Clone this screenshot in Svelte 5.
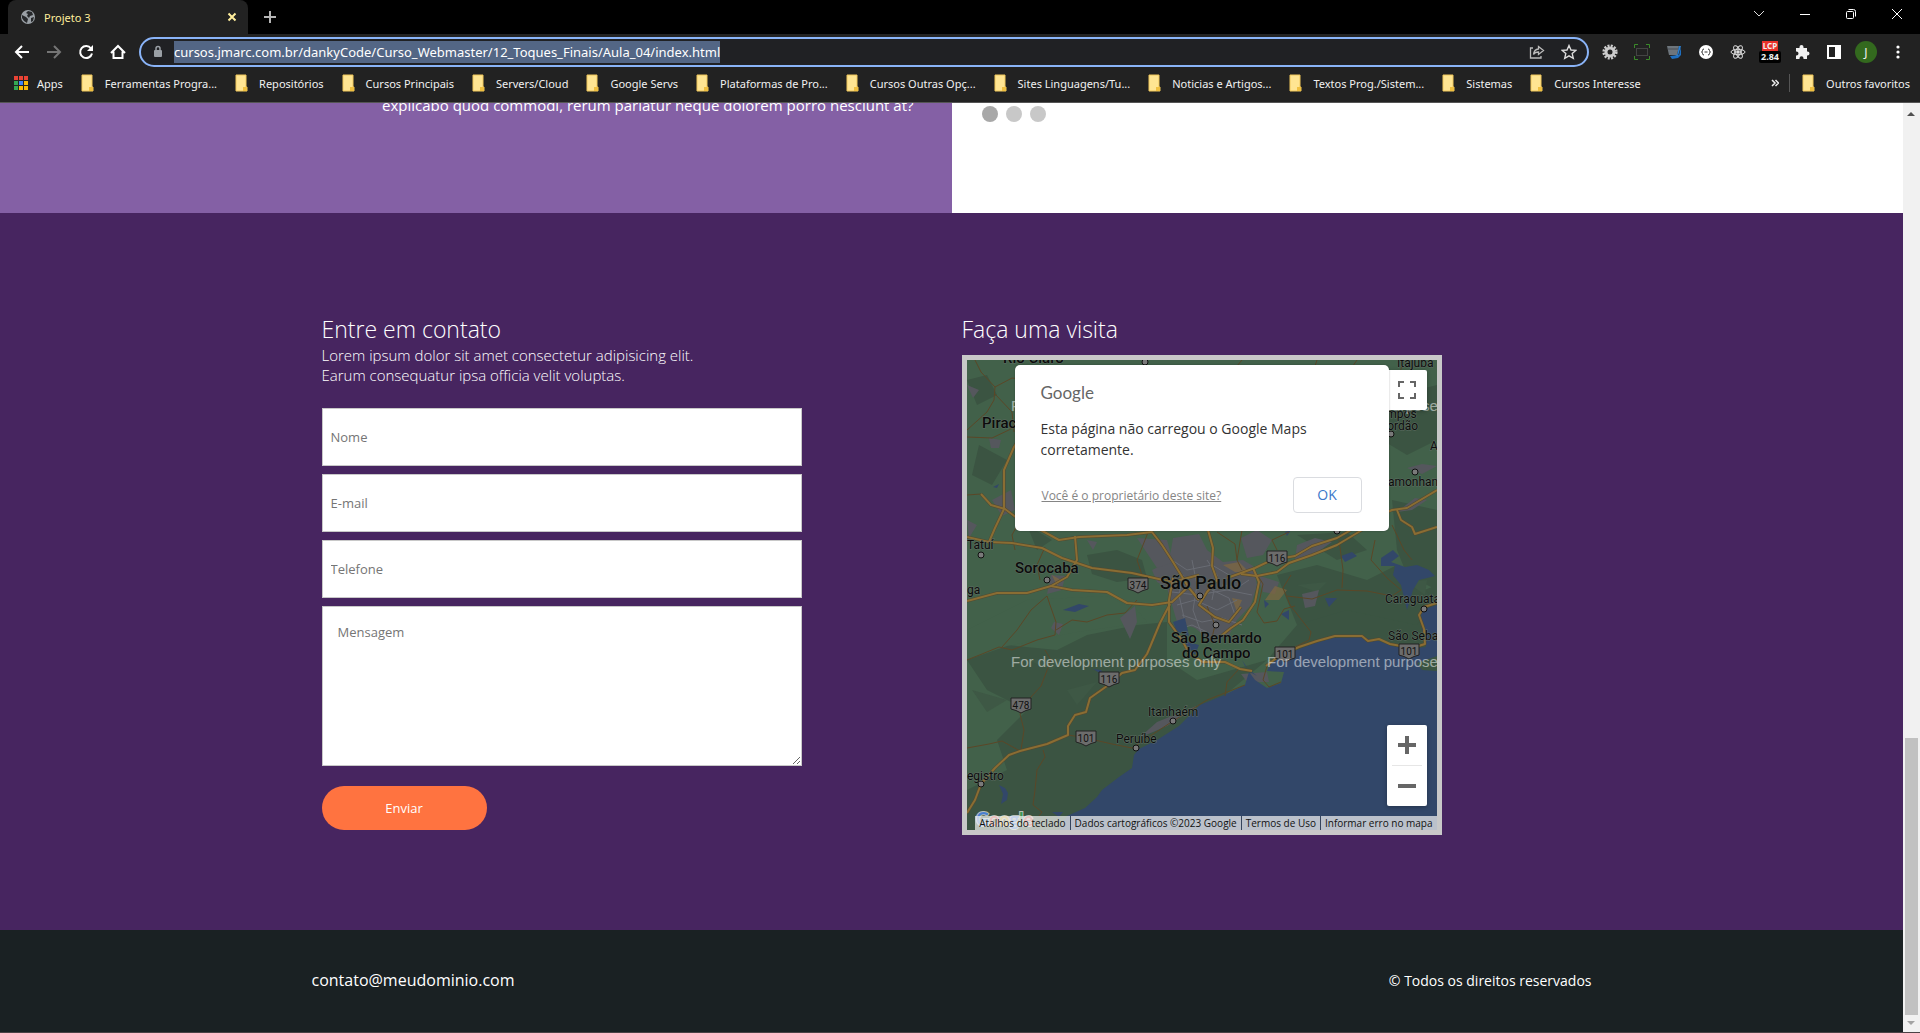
<script>
  const bookmarks = [
    'Ferramentas Progra...', 'Repositórios', 'Cursos Principais', 'Servers/Cloud', 'Google Servs',
    'Plataformas de Pro...', 'Cursos Outras Opç...', 'Sites Linguagens/Tu...', 'Noticias e Artigos...',
    'Textos Prog./Sistem...', 'Sistemas', 'Cursos Interesse'
  ];
  const appColors = ['#ea4335', '#ea4335', '#ea4335', '#34a853', '#4285f4', '#fbbc05', '#34a853', '#fbbc05', '#fbbc05'];
  const fields = [
    { id: 'nome', label: 'Nome', type: 'text' },
    { id: 'email', label: 'E-mail', type: 'email' },
    { id: 'telefone', label: 'Telefone', type: 'tel' }
  ];
  const mapLinks = ['Dados cartográficos ©2023 Google', 'Termos de Uso', 'Informar erro no mapa'];

  const mainRoads = [
    'M0 177 L22 182 L45 183 L75 188 L95 198 L125 208 L165 213 L205 222 L232 215',
    'M14 134 L24 145 L38 149 L50 158 L70 168 L92 180 L112 177 L135 176 L160 175 L185 172 L195 185 L206 202 L214 215 L222 228 L232 240',
    'M22 182 L28 168 L37 149 L37 110 L47 87 L58 70',
    'M108 176 L110 200 L100 217 L84 226 L60 233 L30 233 L0 241',
    'M84 226 L105 230 L140 232 L160 243 L185 245 L205 242 L220 228',
    'M241 170 L246 188 L245 206 L250 220 L240 232 L232 245 L248 257 L262 262 L274 247',
    'M260 218 L288 208 L305 200 L328 196 L345 186 L370 178 L398 162 L425 150 L440 148 L470 130',
    'M274 214 L290 216 L310 212 L322 203 L345 195 L370 185 L395 170',
    'M203 244 L193 263 L183 287 L180 294 L168 310 L155 313 L140 326 L123 338 L119 352 L108 355 L101 366 L101 375 L80 384 L53 391 L42 395 L28 408 L14 424 L8 440 L0 453',
    'M206 218 L202 240 L202 262 L215 280 L222 293 L236 302 L258 302 L273 309 L285 311',
    'M286 208 L292 222 L288 242 L276 260 L264 268 L254 276',
    'M299 306 L312 296 L332 287 L350 281 L368 276 L395 276 L401 281 L412 279 L423 284 L445 288 L458 284 L457 269 L452 255 L457 247 L470 243',
    'M430 150 L434 160 L445 167 L448 174 L470 167'
  ];
  const minorRoads = [
    'M8 0 L14 12 L28 27 L27 40 L20 52 L0 70', 'M28 27 L45 18 L60 20 L82 5', 'M28 34 L45 52 L47 72',
    'M0 77 L25 78 L46 68', 'M0 135 L14 134', 'M54 158 L45 175 L48 190', 'M78 187 L70 205 L73 220',
    'M0 300 L15 294 L32 287 L45 290 L70 280 L88 275 L89 262 L83 245 L80 236', 'M89 270 L105 260 L120 262 L140 255 L158 253 L170 240',
    'M35 287 L50 270 L64 250 L80 236', 'M78 290 L84 300 L74 326 L64 337 L53 354 L57 370 L54 390',
    'M0 388 L22 384 L35 381 L53 391', 'M76 390 L78 397 L70 410 L68 430 L66 445 L75 452 L72 456',
    'M101 375 L119 378 L145 384 L165 388 L206 361 L240 340 L278 325', 'M286 208 L296 224 L290 252 L297 263 L310 261 L317 249 L328 246',
    'M324 215 L316 228 L323 245 L344 272 L342 280 L328 287', 'M320 236 L345 239 L370 230 L400 231 L425 236 L434 230 L420 218 L404 200 L408 180',
    'M372 180 L376 210 L375 228', 'M275 170 L270 200 L275 210', 'M250 172 L268 184 L270 200', 'M310 190 L305 180 L322 172',
    'M275 0 L265 12', 'M350 0 L346 12', 'M390 0 L383 10', 'M437 0 L433 12', 'M300 306 L296 320 L302 327 L314 322', 'M272 309 L260 322 L258 336',
    'M182 170 L170 200 L175 215', 'M240 246 L248 265 L244 282', 'M425 165 L437 190 L445 200'
  ];
  const cityStreets = [
    'M205 200 L220 210 L245 205 L262 215', 'M210 245 L228 240 L250 250 L270 240', 'M215 255 L235 262 L255 258 L275 265',
    'M225 200 L230 225 L226 250 L235 275', 'M245 230 L262 238 L268 255', 'M205 232 L230 235 L260 230 L285 235',
    'M240 200 L250 215 L245 240', 'M208 270 L225 265 L240 272', 'M255 225 L270 228 L282 220', 'M216 215 L212 235 L218 262'
  ];
  const markers = [
    [14, 195], [80, 220], [233, 236], [249, 265], [206, 361], [169, 388], [14, 424],
    [457, 249], [448, 112], [370, 171], [178, 2], [424, 74]
  ];
  const shields = [
    [171, 225, '374'], [310, 198, '116'], [142, 319, '116'], [54, 345, '478'],
    [119, 378, '101'], [318, 294, '101'], [442, 291, '101']
  ];
  const labels = [
    [36, 3, 'Rio Claro', 'mid'], [15, 68, 'Piracicaba', 'mid'], [48, 213, 'Sorocaba', 'mid'],
    [193, 229, 'São Paulo', 'big'], [204, 283, 'São Bernardo', 'mid'], [215, 298, 'do Campo', 'mid'],
    [0, 189, 'Tatuí', 'small'], [0, 234, 'ga', 'small'], [181, 356, 'Itanhaém', 'small'],
    [149, 383, 'Peruíbe', 'small'], [0, 420, 'egistro', 'small'], [418, 243, 'Caraguatatuba', 'small'],
    [421, 280, 'São Sebastião', 'small'], [430, 7, 'Itajubá', 'small'], [405, 58, 'Campos', 'small'],
    [397, 70, 'do Jordão', 'small'], [463, 90, 'Aparecida', 'small'], [397, 126, 'Pindamonhangaba', 'small']
  ];
  const watermarks = [[44, 51], [300, 51], [44, 307], [300, 307]];
</script>

{#snippet folder()}
  <svg class="folder" viewBox="0 0 13 18" aria-hidden="true">
    <path d="M1 1h10v12h1v4H1z" fill="#ffe592" stroke="#f0c75a" />
    <path d="M8 13h4v4H8z" fill="#f0c040" />
  </svg>
{/snippet}

<div class="window">
  <header class="browser">
    <div class="tabstrip">
      <div class="tab">
        <svg width="16" height="16" viewBox="0 0 16 16" aria-hidden="true">
          <circle cx="8" cy="8" r="7" fill="#9aa0a6" />
          <path d="M2 6l4 2 2 2-1 4-3-2-2-3zM8 2l4 1 1 3-3 1-1 2-2-2 1-2-2-1zM11 9l3-1-1 4-2 1z" fill="#26282b" />
        </svg>
        <span class="tab-title">Projeto 3</span>
        <button class="bare" aria-label="Fechar guia">
          <svg width="10" height="10" viewBox="0 0 10 10"><path d="M1.500 1.500l7 7M8.500 1.500l-7 7" stroke="#ffee9c" stroke-width="2" /></svg>
        </button>
      </div>
      <button class="bare new-tab" aria-label="Nova guia">
        <svg width="12" height="12" viewBox="0 0 12 12"><path d="M6 0v12M0 6h12" stroke="#b5b5b5" stroke-width="2" /></svg>
      </button>
      <div class="win-controls">
        <button class="bare" aria-label="Pesquisar guias"><svg width="12" height="12" viewBox="0 0 12 12"><path d="M1 3l5 5 5-5" fill="none" stroke="#ddd" /></svg></button>
        <button class="bare" aria-label="Minimizar"><svg width="12" height="12" viewBox="0 0 12 12"><path d="M1 6.500h10" stroke="#fff" /></svg></button>
        <button class="bare" aria-label="Restaurar"><svg width="12" height="12" viewBox="0 0 12 12" fill="none" stroke="#fff"><rect x="1.500" y="3.500" width="7" height="7" rx="1" /><path d="M3.500 1.500h5q2 0 2 2v5" /></svg></button>
        <button class="bare" aria-label="Fechar"><svg width="12" height="12" viewBox="0 0 12 12"><path d="M1 1l10 10M11 1L1 11" stroke="#fff" /></svg></button>
      </div>
    </div>

    <div class="toolbar">
      <div class="nav">
        <button class="bare" aria-label="Voltar"><svg width="16" height="16" viewBox="0 0 16 16" fill="none" stroke="#fff" stroke-width="2"><path d="M15 8H2M8 2L2 8l6 6" /></svg></button>
        <button class="bare" aria-label="Avançar"><svg width="16" height="16" viewBox="0 0 16 16" fill="none" stroke="#757575" stroke-width="2"><path d="M1 8h13M8 2l6 6-6 6" /></svg></button>
        <button class="bare" aria-label="Recarregar"><svg width="16" height="16" viewBox="0 0 16 16"><path d="M13 4.500A6 6 0 1 0 14 9.500" fill="none" stroke="#fff" stroke-width="2" /><path d="M15 1v6H9z" fill="#fff" /></svg></button>
        <button class="bare" aria-label="Página inicial"><svg width="16" height="16" viewBox="0 0 16 16"><path d="M1 9l7-7 7 7M3.500 7.500V14h9V7.500" fill="none" stroke="#fff" stroke-width="2" /></svg></button>
      </div>
      <div class="omnibox">
        <svg width="10" height="14" viewBox="0 0 10 14" aria-hidden="true"><rect x="1" y="5" width="8" height="7" rx="1" fill="#9aa0a6" /><path d="M3 5V3.500a2 2 0 0 1 4 0V5" fill="none" stroke="#9aa0a6" stroke-width="1.500" /></svg>
        <input class="url" aria-label="Endereço" value="cursos.jmarc.com.br/dankyCode/Curso_Webmaster/12_Toques_Finais/Aula_04/index.html" />
        <div class="omni-actions">
          <button class="bare" aria-label="Compartilhar"><svg width="16" height="16" viewBox="0 0 16 16" fill="none" stroke="#bbb" stroke-width="1.300"><path d="M4 4H1.500v10H12v-2" /><path d="M9.500 2.500l5 4-5 4V8Q6 8 4.500 10.500 5 5.500 9.500 5z" /></svg></button>
          <button class="bare" aria-label="Adicionar aos favoritos"><svg width="16" height="16" viewBox="0 0 16 16"><path d="M8 1.500l2 4.500 4.800.4-3.600 3.200 1.100 4.700L8 11.800l-4.300 2.500 1.100-4.700L1.200 6.400 6 6z" fill="none" stroke="#ddd" stroke-width="1.400" /></svg></button>
        </div>
      </div>
      <div class="extensions">
        <button class="bare" aria-label="Engrenagem"><svg width="16" height="16" viewBox="0 0 16 16"><circle cx="8" cy="8" r="6.300" fill="none" stroke="#ccc" stroke-width="2.600" stroke-dasharray="2 1.300" /><circle cx="8" cy="8" r="4" fill="none" stroke="#ccc" stroke-width="3" /></svg></button>
        <button class="bare" aria-label="Captura"><svg width="16" height="16" viewBox="0 0 16 16" fill="none"><path d="M.5 4V.5H4M12 .5h3.500V4M15.500 12v3.500H12M4 15.500H.5V12" stroke="#3b8a2a" /><rect x="2.500" y="4.500" width="11" height="7" stroke="#444" /></svg></button>
        <button class="bare" aria-label="Gravador"><svg width="16" height="16" viewBox="0 0 16 16"><path d="M4 12l9-1 2-8v8l-3 3-6 1z" fill="#1e6fc0" /><path d="M1 2h12l-2 9H3z" fill="#6d757c" /><path d="M13 2h2l-3 10H9l2-1z" fill="#2b7fd0" /><path d="M2 5h10" stroke="#4a4f55" /></svg></button>
        <button class="bare" aria-label="JSON"><svg width="16" height="16" viewBox="0 0 16 16"><circle cx="8" cy="8" r="7" fill="#fff" /><path d="M6 5q-1.500 0-1.500 1.500T3.500 8q1 0 1 1.500T6 11M10 5q1.500 0 1.500 1.500t1 1.500q-1 0-1 1.500T10 11M6.500 8h3" fill="none" stroke="#333" /></svg></button>
        <button class="bare" aria-label="React"><svg width="16" height="16" viewBox="0 0 16 16" fill="none" stroke="#ddd"><ellipse cx="8" cy="8" rx="7" ry="2.700" /><ellipse cx="8" cy="8" rx="7" ry="2.700" transform="rotate(60 8 8)" /><ellipse cx="8" cy="8" rx="7" ry="2.700" transform="rotate(120 8 8)" /><circle cx="8" cy="8" r="1.300" fill="#ddd" /></svg></button>
        <button class="bare lcp" aria-label="LCP 2.84"><span class="lcp-name">LCP</span><span class="lcp-value">2.84</span></button>
        <button class="bare" aria-label="Extensões"><svg width="16" height="16" viewBox="0 0 16 16"><path d="M2 4h3.500V3a2 2 0 0 1 4 0v1H13v3.500h.5a2 2 0 0 1 0 4H13V15H9.500v-.7a2 2 0 0 0-4 0V15H2v-3.500h.5a2 2 0 0 0 0-4H2z" fill="#f1f1f1" /></svg></button>
        <button class="bare" aria-label="Painel lateral"><svg width="16" height="16" viewBox="0 0 16 16"><path d="M1 1h14v14H1zM3 3v10h6V3z" fill="#fff" fill-rule="evenodd" /></svg></button>
        <button class="bare avatar" aria-label="Perfil">J</button>
        <button class="bare" aria-label="Menu"><svg width="16" height="16" viewBox="0 0 16 16" fill="#fff"><circle cx="8" cy="3" r="1.600" /><circle cx="8" cy="8" r="1.600" /><circle cx="8" cy="13" r="1.600" /></svg></button>
      </div>
    </div>

    <nav class="bookmarks">
      <a class="bookmark apps" href="#apps">
        <svg width="14" height="14" viewBox="0 0 14 14" aria-hidden="true">
          {#each appColors as c, i}<rect x={(i % 3) * 5} y={Math.floor(i / 3) * 5} width="4" height="4" fill={c} />{/each}
        </svg>
        Apps
      </a>
      {#each bookmarks as name}
        <a class="bookmark" href="#favorito">{@render folder()}{name}</a>
      {/each}
      <div class="overflow">
        <button class="bare" aria-label="Mais favoritos"><svg width="8" height="8" viewBox="0 0 8 8"><path d="M1 1l3 3-3 3M4.500 1l3 3-3 3" fill="none" stroke="#eee" stroke-width="1.500" /></svg></button>
        <a class="bookmark" href="#outros">{@render folder()}Outros favoritos</a>
      </div>
    </nav>
  </header>

  <div class="viewport">
    <div class="page">
      <section class="intro">
        <div class="about"><p>explicabo quod commodi, rerum pariatur neque dolorem porro nesciunt at?</p></div>
        <div class="slides">
          <button class="dot active" aria-label="Slide 1"></button>
          <button class="dot" aria-label="Slide 2"></button>
          <button class="dot" aria-label="Slide 3"></button>
        </div>
      </section>

      <section class="contact">
        <div class="container">
          <form class="column">
            <h2>Entre em contato</h2>
            <p>Lorem ipsum dolor sit amet consectetur adipisicing elit.<br />Earum consequatur ipsa officia velit voluptas.</p>
            {#each fields as f}
              <input id={f.id} type={f.type} placeholder={f.label} aria-label={f.label} />
            {/each}
            <textarea placeholder="Mensagem" aria-label="Mensagem"></textarea>
            <button class="send" type="button">Enviar</button>
          </form>

          <div class="column">
            <h2>Faça uma visita</h2>
            <div class="map">
              <svg class="tiles" viewBox="0 0 470 470" preserveAspectRatio="xMidYMid slice" role="img" aria-label="Mapa de São Paulo">
                <rect width="470" height="470" fill="#42614a" />
                <g fill="#3b5442">
                  <path d="M0 300L40 285 90 290 120 275 170 265 200 262 200 300 230 320 300 300 330 265 360 235 420 245 470 225V300H300L180 400 100 470H0V430L40 410 30 380 60 350 20 330z" />
                  <path d="M120 195L150 190 175 200 180 218 150 222 125 214zM310 215L350 205 400 220 430 205 470 240 450 265 380 250 330 265z" />
                  <path d="M395 20L420 10 450 30 470 25V80L440 95 415 80zM330 175L380 172 400 190 370 200zM0 20L20 15 30 35 10 45zM12 85L40 100 25 125 5 115zM60 165L85 180 70 190z" />
                  <path d="M425 140L470 150V230L440 215 430 190z" />
                </g>
                <g fill="#3e5845">
                  <path d="M5 330L40 340 20 352zM60 300L100 298 85 310zM100 330L130 322 110 345zM330 225L360 222 350 232zM440 222L460 220 458 235zM10 265L50 258 40 272z" />
                </g>
                <path d="M0 270L60 240 140 236 170 250 180 262 110 272 40 286 0 300z" fill="#42614a" />
                <g fill="#55575d">
                  <path d="M206 178L232 174 240 190 256 202 276 200 286 206 290 225 284 245 270 260 262 275 245 282 228 268 210 262 205 245 200 228 190 222 185 210 202 202z" />
                  <path d="M274 178L290 170 305 180 296 195 280 198zM330 185L348 178 365 182 345 196 328 200zM335 234L352 230 348 246 338 248zM290 215L312 222 308 234 296 232zM153 258L168 246 170 262 163 279zM87 262L96 264 92 275 84 268z" />
                  <path d="M25 140L44 130 48 150 35 156zM22 78L34 80 32 88 24 88zM84 215L98 216 95 230 80 234zM170 178L200 180 206 202 190 208zM0 25L12 30 6 38zM0 160L10 165 2 178zM120 180L130 182 126 190zM430 152L448 138 460 140 445 150zM172 378L190 362 232 345 200 366zM274 314L300 312 302 322 280 322zM440 108L455 104 470 106 455 114z" />
                </g>
                <g fill="#806840" opacity="0.7"><path d="M256 205L272 202 282 212 268 212zM265 238L275 240 270 252zM298 240L308 226 320 230 312 240zM85 215L94 220 90 226z" /></g>
                <g class="streets">{#each cityStreets as d}<path {d} />{/each}</g>
                <path class="water" d="M92 470L100 456 118 448 130 437 135 430 152 417 165 408 167 395 172 389 190 380 212 366 233 345 255 336 278 325 282 312 288 320 300 328 314 323 317 312 300 311 305 300 325 292 345 284 366 278 395 277 412 281 425 286 442 289 459 287 455 270 454 250 470 245V470z" />
                <path d="M450 303L470 296V311L455 310z" fill="#3b5442" />
                <g class="water">
                  <path d="M206 262L218 258 222 276 210 272zM215 280L232 285 228 295zM275 300L283 312 290 316 278 306zM374 196L385 192 390 196 378 202zM358 238L370 238 362 247zM314 254L322 250 322 260zM297 240L302 244 298 248z" />
                  <path d="M414 198L426 190 432 196 424 202 438 207 450 205 462 210 468 216 452 220 446 230 440 250 434 225 426 215 428 206 414 206zM96 250L112 244 122 246 108 252zM126 309L134 310 138 316zM318 172L324 170 320 176zM26 127L32 124 30 128z" />
                  <path d="M32 425L38 428 41 433 40 440 34 444 36 434zM85 452L96 452 92 457z" />
                </g>
                <g class="minor">{#each minorRoads as d}<path {d} />{/each}</g>
                <g class="major-edge">{#each mainRoads as d}<path {d} />{/each}</g>
                <g class="major">{#each mainRoads as d}<path {d} />{/each}</g>
                <g class="markers">{#each markers as [cx, cy]}<circle {cx} {cy} r="3" />{/each}</g>
                {#each shields as [x, y, n]}
                  <g class="shield">
                    <path d={`M${x - 10} ${y - 7}h20v11q-5 1-10 4q-5-3-10-4z`} />
                    <text {x} y={y + 4}>{n}</text>
                  </g>
                {/each}
                {#each labels as [x, y, name, size]}<text class="place {size}" {x} {y}>{name}</text>{/each}
                {#each watermarks as [x, y]}<text class="watermark" {x} {y}>For development purposes only</text>{/each}
                <text class="logo" x="9" y="466"><tspan fill="#4a7fd0">G</tspan><tspan fill="#c94a40">o</tspan><tspan fill="#c9a030">o</tspan><tspan fill="#4a7fd0">g</tspan><tspan fill="#3c9a55">l</tspan><tspan fill="#c94a40">e</tspan></text>
              </svg>

              <button class="map-control fullscreen" aria-label="Tela cheia"><svg width="18" height="18" viewBox="0 0 18 18"><path d="M1 6V1h5M12 1h5v5M17 12v5h-5M6 17H1v-5" fill="none" stroke="#666" stroke-width="2" /></svg></button>
              <div class="map-control zoom">
                <button class="bare" aria-label="Aumentar zoom"><svg width="18" height="18" viewBox="0 0 18 18"><path d="M9 0v18M0 9h18" stroke="#666" stroke-width="4" /></svg></button>
                <button class="bare" aria-label="Diminuir zoom"><svg width="18" height="18" viewBox="0 0 18 18"><path d="M0 9h18" stroke="#666" stroke-width="4" /></svg></button>
              </div>
              <div class="credits">
                <button class="bare">Atalhos do teclado</button>
                {#each mapLinks as t}<a href="#mapa">{t}</a>{/each}
              </div>
              <div class="dialog" role="dialog" aria-label="Google Maps">
                <div class="brand">Google</div>
                <p>Esta página não carregou o Google Maps corretamente.</p>
                <div class="dialog-row">
                  <a href="#ajuda">Você é o proprietário deste site?</a>
                  <button>OK</button>
                </div>
              </div>
            </div>
          </div>
        </div>
      </section>

      <footer>
        <div class="container foot">
          <a href="#contato">contato@meudominio.com</a>
          <span>© Todos os direitos reservados</span>
        </div>
      </footer>
    </div>
    <div class="scrollbar" aria-hidden="true">
      <svg width="17" height="20" viewBox="0 0 17 20"><path d="M4 13l4-4 4 4z" fill="#505050" /></svg>
      <div class="track"><div class="thumb"></div></div>
      <svg width="17" height="17" viewBox="0 0 17 17"><path d="M4 6l4 4 4-4z" fill="#a3a3a3" /></svg>
    </div>
  </div>
</div>

<style>
  :global(body) { margin: 0; background: #1a2123; }
  * { box-sizing: border-box; }
  .window {
    min-height: 100vh;
    display: flex;
    flex-direction: column;
    font-family: "Open Sans", "Noto Sans", sans-serif;
    border-bottom: 1px solid #4a4245;
  }
  .bare {
    border: 0; padding: 0; background: none; color: inherit; font: inherit;
    display: flex; align-items: center; justify-content: center;
  }
  svg { display: block; flex: none; }
  a { color: inherit; text-decoration: none; }
  h2, p { margin: 0; }

  .browser { background: #222; color: #f1f1f1; border-bottom: 1px solid #555; font-family: "Noto Sans", sans-serif; }
  .tabstrip { display: flex; align-items: center; height: 34px; background: #000; padding-left: 8px; }
  .tab {
    display: flex; align-items: center; gap: 8px; width: 240px; height: 34px; padding: 0 11px 0 12px;
    background: #222; border-radius: 8px 8px 0 0; color: #ffee9c; font-size: 11px;
  }
  .tab-title { flex: 1; }
  .new-tab { margin-left: 16px; }
  .win-controls { margin-left: auto; display: flex; gap: 34px; padding: 0 17px 6px 0; }

  .toolbar { display: flex; align-items: center; height: 36px; padding-left: 14px; }
  .nav { display: flex; gap: 16px; width: 125px; }
  .omnibox {
    flex: 1; display: flex; align-items: center; height: 30px; padding: 0 10px 0 12px;
    border: 2px solid #8ab4f8; border-radius: 15px; background: #202124;
  }
  .url {
    field-sizing: content; margin-left: 11px; padding: 0; height: 22px; border: 0; outline: 0;
    background: #536685; color: #fff; font: 13px "Noto Sans", sans-serif;
  }
  .omni-actions { margin-left: auto; display: flex; gap: 16px; }
  .extensions { display: flex; align-items: center; gap: 16px; padding: 0 14px 0 13px; }
  .lcp { flex-direction: column; width: 16px; font-size: 9px; line-height: 10px; font-weight: 700; }
  .lcp-name { background: #e8332a; padding: 0 1px; font-size: 8px; }
  .lcp-value { background: #000; padding: 1px 2px; border-radius: 2px; }
  .avatar { width: 22px; height: 22px; margin: 0 -3px; border-radius: 50%; background: #33691e; font-size: 12px; }

  .bookmarks { display: flex; align-items: center; height: 32px; padding: 0 10px 6px 14px; font-size: 11px; white-space: nowrap; }
  .bookmark { display: flex; align-items: center; gap: 11px; margin-right: 18px; }
  .apps { gap: 9px; }
  .folder { width: 13px; height: 18px; }
  .overflow { margin-left: auto; display: flex; align-items: center; gap: 10px; }
  .overflow .bookmark { margin: 0; padding-left: 12px; border-left: 1px solid #555; }

  .viewport { flex: 1; display: flex; }
  .page { flex: 1; display: flex; flex-direction: column; min-width: 0; }
  .intro { display: flex; height: 110px; overflow: hidden; background: #fff; }
  .about { width: 50%; background: #8460a5; color: #fff; padding-right: 38px; text-align: right; }
  .about p { margin-top: -9px; font-size: 15px; line-height: 22px; }
  .slides { display: flex; gap: 8px; padding: 3px 30px; }
  .dot { width: 16px; height: 16px; padding: 0; border: 0; border-radius: 50%; background: #c8c8c8; }
  .dot.active { background: #a8a8a8; }

  .contact { flex: 1; padding: 100px 0 95px; background: #472560; color: #fff; }
  .container { max-width: 1280px; margin: 0 auto; display: flex; }
  .column { flex: 1; padding: 0 10px; display: flex; flex-direction: column; align-items: flex-start; }
  h2 { font-size: 23px; line-height: 32px; font-weight: 300; }
  .column > p { margin-bottom: 23px; font-size: 15px; line-height: 20px; font-weight: 300; }
  form input, textarea {
    width: 480px; max-width: 100%; border: 1px solid #c8c8c8; background: #fff; color: #333; outline: 0;
    font: 13px "Open Sans", sans-serif; margin: 0 0 8px;
  }
  form input { height: 58px; padding: 0 8px; }
  textarea { height: 160px; padding: 16px 15px; margin-bottom: 20px; }
  ::placeholder { color: #757575; }
  .send { width: 165px; height: 44px; border: 0; border-radius: 22px; background: #ff7340; color: #fff; font: 13px "Open Sans", sans-serif; }

  .map { position: relative; width: 480px; max-width: 100%; height: 480px; margin-top: 10px; border: 5px solid #c8c8c8; overflow: hidden; }
  .tiles { width: 100%; height: 100%; }
  .water { fill: #324769; }
  .minor, .major, .major-edge, .streets { fill: none; stroke-linejoin: round; }
  .minor { stroke: #5b4727; stroke-width: 1; }
  .major-edge { stroke: #54492f; stroke-width: 3; }
  .major { stroke: #8a6d33; stroke-width: 2; }
  .streets { stroke: #686b73; stroke-width: 1; }
  .markers { fill: #7a7a7a; stroke: #111; stroke-width: 1; }
  .shield path { fill: #6c6c6c; stroke: #222; }
  .shield text { font: 10px Roboto, sans-serif; text-anchor: middle; fill: #111; }
  .place { font-family: Roboto, sans-serif; fill: #0c0c0c; paint-order: stroke; stroke: #5f6d63; stroke-width: 1; }
  .small { font-size: 12px; }
  .mid { font-size: 15px; font-weight: 500; }
  .big { font-size: 18px; font-weight: 500; }
  .watermark { font: 15px "Liberation Sans", sans-serif; fill: #fff; opacity: 0.5; }
  .logo { font: 700 18px Lato, sans-serif; paint-order: stroke; stroke: #b9c0b9; stroke-width: 2; }

  .map-control { position: absolute; right: 10px; width: 40px; background: #fff; border: 0; border-radius: 2px; box-shadow: 0 1px 4px rgba(0, 0, 0, 0.3); }
  .fullscreen { top: 10px; height: 40px; padding: 11px; }
  .zoom { bottom: 24px; padding: 0 5px; }
  .zoom .bare { width: 30px; height: 40px; }
  .zoom .bare + .bare { height: 41px; border-top: 1px solid #e6e6e6; }
  .credits {
    position: absolute; right: 0; bottom: 0; display: flex; height: 14px;
    font-size: 10px; line-height: 14px; color: #111; white-space: nowrap;
  }
  .credits > * { padding: 0 4px; background: rgba(245, 245, 245, 0.7); }
  .credits a { border-left: 1px solid #35445c; }
  .dialog { position: absolute; top: 5px; left: 48px; width: 374px; height: 166px; padding: 18px 27px 17px 26px; border-radius: 5px; background: #fff; color: #333; box-shadow: 0 0 2px rgba(0, 0, 0, 0.3); }
  .brand { font: 17px/20px Lato, sans-serif; color: #666; }
  .dialog p { margin-top: 15px; font-size: 14px; line-height: 21px; }
  .dialog-row { display: flex; align-items: center; justify-content: space-between; margin-top: 17px; }
  .dialog-row a { padding-left: 1px; font-size: 12px; color: #858585; text-decoration: underline; }
  .dialog-row button { width: 69px; height: 36px; padding: 0 0 2px; border: 1px solid #dadce0; border-radius: 4px; background: #fff; color: #3b78c9; font: 14px "Open Sans", sans-serif; }

  footer { background: #1a2123; color: #fff; }
  .foot { height: 102px; padding-bottom: 2px; justify-content: space-between; align-items: center; font-size: 16px; }
  .foot span { font-size: 14px; }

  .scrollbar { width: 17px; display: flex; flex-direction: column; background: #f1f1f1; }
  .track { flex: 1; display: flex; align-items: flex-end; padding: 0 2px; }
  .thumb { width: 13px; height: 31%; background: #c1c1c1; }
</style>
